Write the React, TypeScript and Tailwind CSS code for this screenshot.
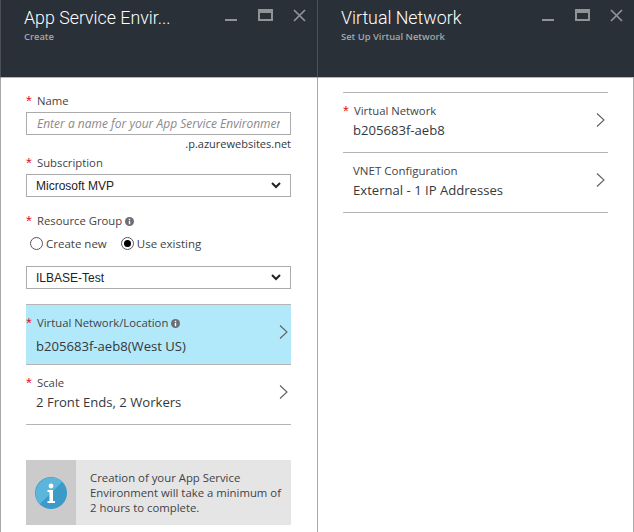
const font = "[font-family:'Open_Sans',sans-serif]"

function Star() {
  return <span className="w-[11px] shrink-0 text-[15px] leading-[14px] text-[#e81123] font-['Liberation_Sans']">*</span>
}

function InfoDot() {
  return (
    <svg width="9" height="9" viewBox="0 0 9 9" className="ml-[3px] shrink-0">
      <circle cx="4.5" cy="4.5" r="4.5" fill="#6b6f73" />
      <rect x="3.8" y="3.8" width="1.4" height="3.4" fill="#fff" />
      <rect x="3.8" y="1.8" width="1.4" height="1.3" fill="#fff" />
    </svg>
  )
}

function WindowButtons() {
  return (
    <div className="flex items-start">
      <div className="mt-[19px] h-[2px] w-[12px] bg-[#8f9499]" />
      <div className="ml-[21px] mt-[9px] h-[12px] w-[15px] border-2 border-t-[4px] border-[#8f9499]" />
      <svg width="13" height="13" viewBox="0 0 13 13" className="ml-[20px] mt-[9px]">
        <path d="M1 1L12 12M12 1L1 12" stroke="#8f9499" strokeWidth="1.7" />
      </svg>
    </div>
  )
}

function BladeHeader({ title, subtitle, sides = '' }: { title: string; subtitle: string; sides?: string }) {
  return (
    <div className={`flex h-[78px] shrink-0 justify-between border-b border-b-[#b5b5b5] bg-[#2a3037] pl-[23px] pr-[11px] ${sides}`}>
      <div>
        <div className="mt-[5px] font-['Roboto'] text-[17.8px] font-light leading-[26px] text-white">{title}</div>
        <div className="mt-[-1px] text-[9.4px] font-semibold leading-[14px] text-[#a4a7aa]">{subtitle}</div>
      </div>
      <WindowButtons />
    </div>
  )
}

function Label({ text, info }: { text: string; info?: boolean }) {
  return (
    <div className="flex h-[16px] items-center text-[11.3px] text-[#3f4347]">
      <Star />
      <span>{text}</span>
      {info && <InfoDot />}
    </div>
  )
}

function SelectBox({ value }: { value: string }) {
  return (
    <div className="flex h-[23px] items-center justify-between border border-[#ababab] px-[9px] font-['Liberation_Sans'] text-[12px] text-[#222]">
      <span>{value}</span>
      <svg width="10" height="7" viewBox="0 0 10 7">
        <path d="M1 1L5 5L9 1" fill="none" stroke="#222" strokeWidth="2" />
      </svg>
    </div>
  )
}

function Radio({ label, checked }: { label: string; checked?: boolean }) {
  return (
    <div className="flex items-center text-[11.5px] text-[#3f4347]">
      <span className="mb-[2px] mr-[3px] flex h-[13px] w-[13px] items-center justify-center rounded-full border border-[#555]">
        {checked && <span className="h-[7px] w-[7px] rounded-full bg-black" />}
      </span>
      {label}
    </div>
  )
}

function Chevron() {
  return (
    <svg width="9" height="14" viewBox="0 0 9 14" className="mt-[20px] shrink-0">
      <path d="M1 0.5L8 7L1 13.5" fill="none" stroke="#5c6066" strokeWidth="1.1" />
    </svg>
  )
}

function PickerRow({ label, value, info, required = true, highlight, gap }: {
  label: string
  value: string
  info?: boolean
  required?: boolean
  highlight?: boolean
  gap: string
}) {
  return (
    <div className={`flex h-[60px] items-start justify-between border-b border-[#b5b5b5] pr-[3px] ${highlight ? 'bg-[#b2e9fa]' : ''}`}>
      <div className={`flex flex-col pt-[10px] ${gap}`}>
        {required ? <Label text={label} info={info} /> : (
          <div className="flex h-[16px] items-center pl-[10px] text-[11.5px] text-[#3f4347]">{label}</div>
        )}
        <div className="pl-[10px] text-[13.1px] leading-[18px] text-[#34383c]">{value}</div>
      </div>
      <Chevron />
    </div>
  )
}

export default function App() {
  return (
    <div className={`flex h-[532px] w-[634px] overflow-hidden bg-white ${font}`}>
      <section className="flex w-[318px] shrink-0 flex-col">
        <BladeHeader title="App Service Envir..." subtitle="Create" sides="border-x border-x-[#4b5157]" />
        <div className="flex flex-1 flex-col border-x border-[#a9a9a9] pl-[25px] pr-[26px] pt-[15px]">
          <Label text="Name" />
          <div className="mt-[3px] flex h-[23px] items-center border border-[#ababab] px-[10px] text-[12px] italic text-[#8a8a8a]">
            <span className="overflow-hidden whitespace-nowrap">Enter a name for your App Service Environment</span>
          </div>
          <div className="text-right text-[11px] leading-[18px] text-[#34383c]">.p.azurewebsites.net</div>
          <div className="mt-[2px]"><Label text="Subscription" /></div>
          <div className="mt-[3px]"><SelectBox value="Microsoft MVP" /></div>
          <div className="mt-[16px]"><Label text="Resource Group" info /></div>
          <div className="mt-[7px] flex h-[16px] gap-[14px] pl-[4px]">
            <Radio label="Create new" />
            <Radio label="Use existing" checked />
          </div>
          <div className="mt-[14px]"><SelectBox value="ILBASE-Test" /></div>
          <div className="mt-[15px] border-t border-[#b5b5b5]">
            <PickerRow label="Virtual Network/Location" value="b205683f-aeb8(West US)" info highlight gap="gap-[6px]" />
            <PickerRow label="Scale" value="2 Front Ends, 2 Workers" gap="gap-[2px]" />
          </div>
          <div className="mt-[35px] flex h-[65px] bg-[#e5e5e5]">
            <div className="flex w-[50px] shrink-0 items-center justify-center bg-[#cbcbcb]">
              <svg width="32" height="32" viewBox="0 0 32 32">
                <circle cx="16" cy="16" r="16" fill="#3c9ac9" />
                <path d="M4.7 27.3A16 16 0 0 1 27.3 4.7Z" fill="#5cb6dc" />
                <circle cx="16" cy="9" r="2.4" fill="#fff" />
                <path d="M12.5 13H18V24H20V26H12.5V24H14.5V15H12.5Z" fill="#fff" />
              </svg>
            </div>
            <p className="pl-[14px] pr-[6px] pt-[10px] text-[11.35px] leading-[15px] text-[#3f4347]">
              Creation of your App Service Environment will take a minimum of 2 hours to complete.
            </p>
          </div>
        </div>
      </section>
      <section className="flex min-w-0 flex-1 flex-col">
        <BladeHeader title="Virtual Network" subtitle="Set Up Virtual Network" />
        <div className="flex-1 border-r border-[#a9a9a9] pl-[25px] pr-[25px] pt-[14px]">
          <div className="border-t border-[#b5b5b5]">
            <PickerRow label="Virtual Network" value="b205683f-aeb8" gap="gap-[2px]" />
            <PickerRow label="VNET Configuration" value="External - 1 IP Addresses" required={false} gap="gap-[2px]" />
          </div>
        </div>
      </section>
    </div>
  )
}
